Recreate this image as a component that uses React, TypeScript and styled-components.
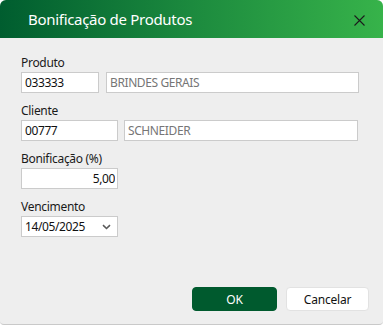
import React from 'react';
import styled, { createGlobalStyle } from 'styled-components';

const GlobalStyle = createGlobalStyle`
  html, body {
    margin: 0;
    padding: 0;
    background: #ffffff;
  }
  * {
    box-sizing: border-box;
  }
`;

const FONT = `'Noto Sans', 'Open Sans', Arial, sans-serif`;

const CloseIcon = () => (
  <svg width="11" height="11" viewBox="0 0 11 11">
    <path d="M0.5 0.5 L10.5 10.5 M10.5 0.5 L0.5 10.5" stroke="#1b1b1b" strokeWidth="1.1" fill="none" />
  </svg>
);

const Chevron = () => (
  <svg width="9" height="6" viewBox="0 0 9 6">
    <path d="M1 1.2 L4.5 4.5 L8 1.2" stroke="#5a5a5a" strokeWidth="1.6" fill="none" />
  </svg>
);

const App = () => (
  <>
    <GlobalStyle />
    <Dialog>
      <Header>
        <Title>Bonificação de Produtos</Title>
        <CloseButton aria-label="Fechar">
          <CloseIcon />
        </CloseButton>
      </Header>

      <Body>
        <Field>
          <Label>Produto</Label>
          <Row $cols="78px 253px" $gap={7}>
            <Input defaultValue="033333" />
            <Input defaultValue="BRINDES GERAIS" disabled />
          </Row>
        </Field>

        <Field>
          <Label>Cliente</Label>
          <Row $cols="97px 234px" $gap={6}>
            <Input defaultValue="00777" />
            <Input defaultValue="SCHNEIDER" disabled />
          </Row>
        </Field>

        <Field>
          <Label>Bonificação (%)</Label>
          <Row $cols="97px" $gap={0}>
            <Input defaultValue="5,00" $align="right" />
          </Row>
        </Field>

        <Field>
          <Label>Vencimento</Label>
          <Row $cols="97px" $gap={0}>
            <Select type="button">
              <span>14/05/2025</span>
              <Chevron />
            </Select>
          </Row>
        </Field>
      </Body>

      <Footer>
        <Button $primary>OK</Button>
        <Button>Cancelar</Button>
      </Footer>
    </Dialog>
  </>
);

export default App;

const Dialog = styled.div`
  display: flex;
  flex-direction: column;
  width: 383px;
  height: 325px;
  background: #eeeeee;
  border-radius: 6px 6px 4px 4px;
  border-bottom: 1px solid #c9c9c9;
  overflow: hidden;
  font-family: ${FONT};
`;

const Header = styled.div`
  display: flex;
  align-items: center;
  justify-content: space-between;
  height: 38px;
  padding: 0 17px 0 28px;
  background: linear-gradient(90deg, #005d2f 0%, #1c8a3e 50%, #37b34a 100%);
`;

const Title = styled.div`
  color: #ffffff;
  font-size: 15px;
  font-weight: 400;
  letter-spacing: -0.3px;
  padding-bottom: 1px;
`;

const CloseButton = styled.button`
  display: flex;
  align-items: center;
  justify-content: center;
  width: 14px;
  height: 14px;
  padding: 0;
  margin-top: 2px;
  border: none;
  background: transparent;
  cursor: pointer;
`;

const Body = styled.div`
  display: flex;
  flex-direction: column;
  gap: 10px;
  padding: 17px 25px 0 21px;
`;

const Field = styled.div`
  display: flex;
  flex-direction: column;
  gap: 1px;
`;

const Label = styled.label`
  height: 16px;
  line-height: 16px;
  font-size: 12px;
  letter-spacing: -0.3px;
  color: #1a1a1a;
`;

const Row = styled.div<{ $cols: string; $gap: number }>`
  display: grid;
  grid-template-columns: ${({ $cols }) => $cols};
  column-gap: ${({ $gap }) => $gap}px;
`;

const Input = styled.input<{ $align?: 'left' | 'right' }>`
  height: 21px;
  width: 100%;
  padding: 0 ${({ $align }) => ($align === 'right' ? '2px' : '3px')};
  border: 1px solid #cbcbcb;
  background: #ffffff;
  font-family: ${FONT};
  font-size: 12px;
  letter-spacing: -0.4px;
  color: #111111;
  text-align: ${({ $align }) => $align || 'left'};
  outline: none;

  &:disabled {
    color: #767676;
    background: #ffffff;
  }
`;

const Select = styled.button`
  display: flex;
  align-items: center;
  justify-content: space-between;
  height: 21px;
  width: 100%;
  padding: 0 6px 0 3px;
  border: 1px solid #cbcbcb;
  background: #ffffff;
  font-family: ${FONT};
  font-size: 12px;
  letter-spacing: -0.4px;
  color: #111111;
  cursor: pointer;
`;

const Footer = styled.div`
  display: flex;
  justify-content: flex-end;
  gap: 9px;
  margin-top: auto;
  padding: 0 14px 13px 0;
`;

const Button = styled.button<{ $primary?: boolean }>`
  width: ${({ $primary }) => ($primary ? '85px' : '83px')};
  height: 24px;
  border-radius: 4px;
  border: 1px solid ${({ $primary }) => ($primary ? '#005a2e' : '#e2e2e2')};
  background: ${({ $primary }) => ($primary ? '#005a2e' : '#ffffff')};
  color: ${({ $primary }) => ($primary ? '#ffffff' : '#111111')};
  font-family: ${FONT};
  font-size: 12px;
  letter-spacing: -0.2px;
  cursor: pointer;
`;
